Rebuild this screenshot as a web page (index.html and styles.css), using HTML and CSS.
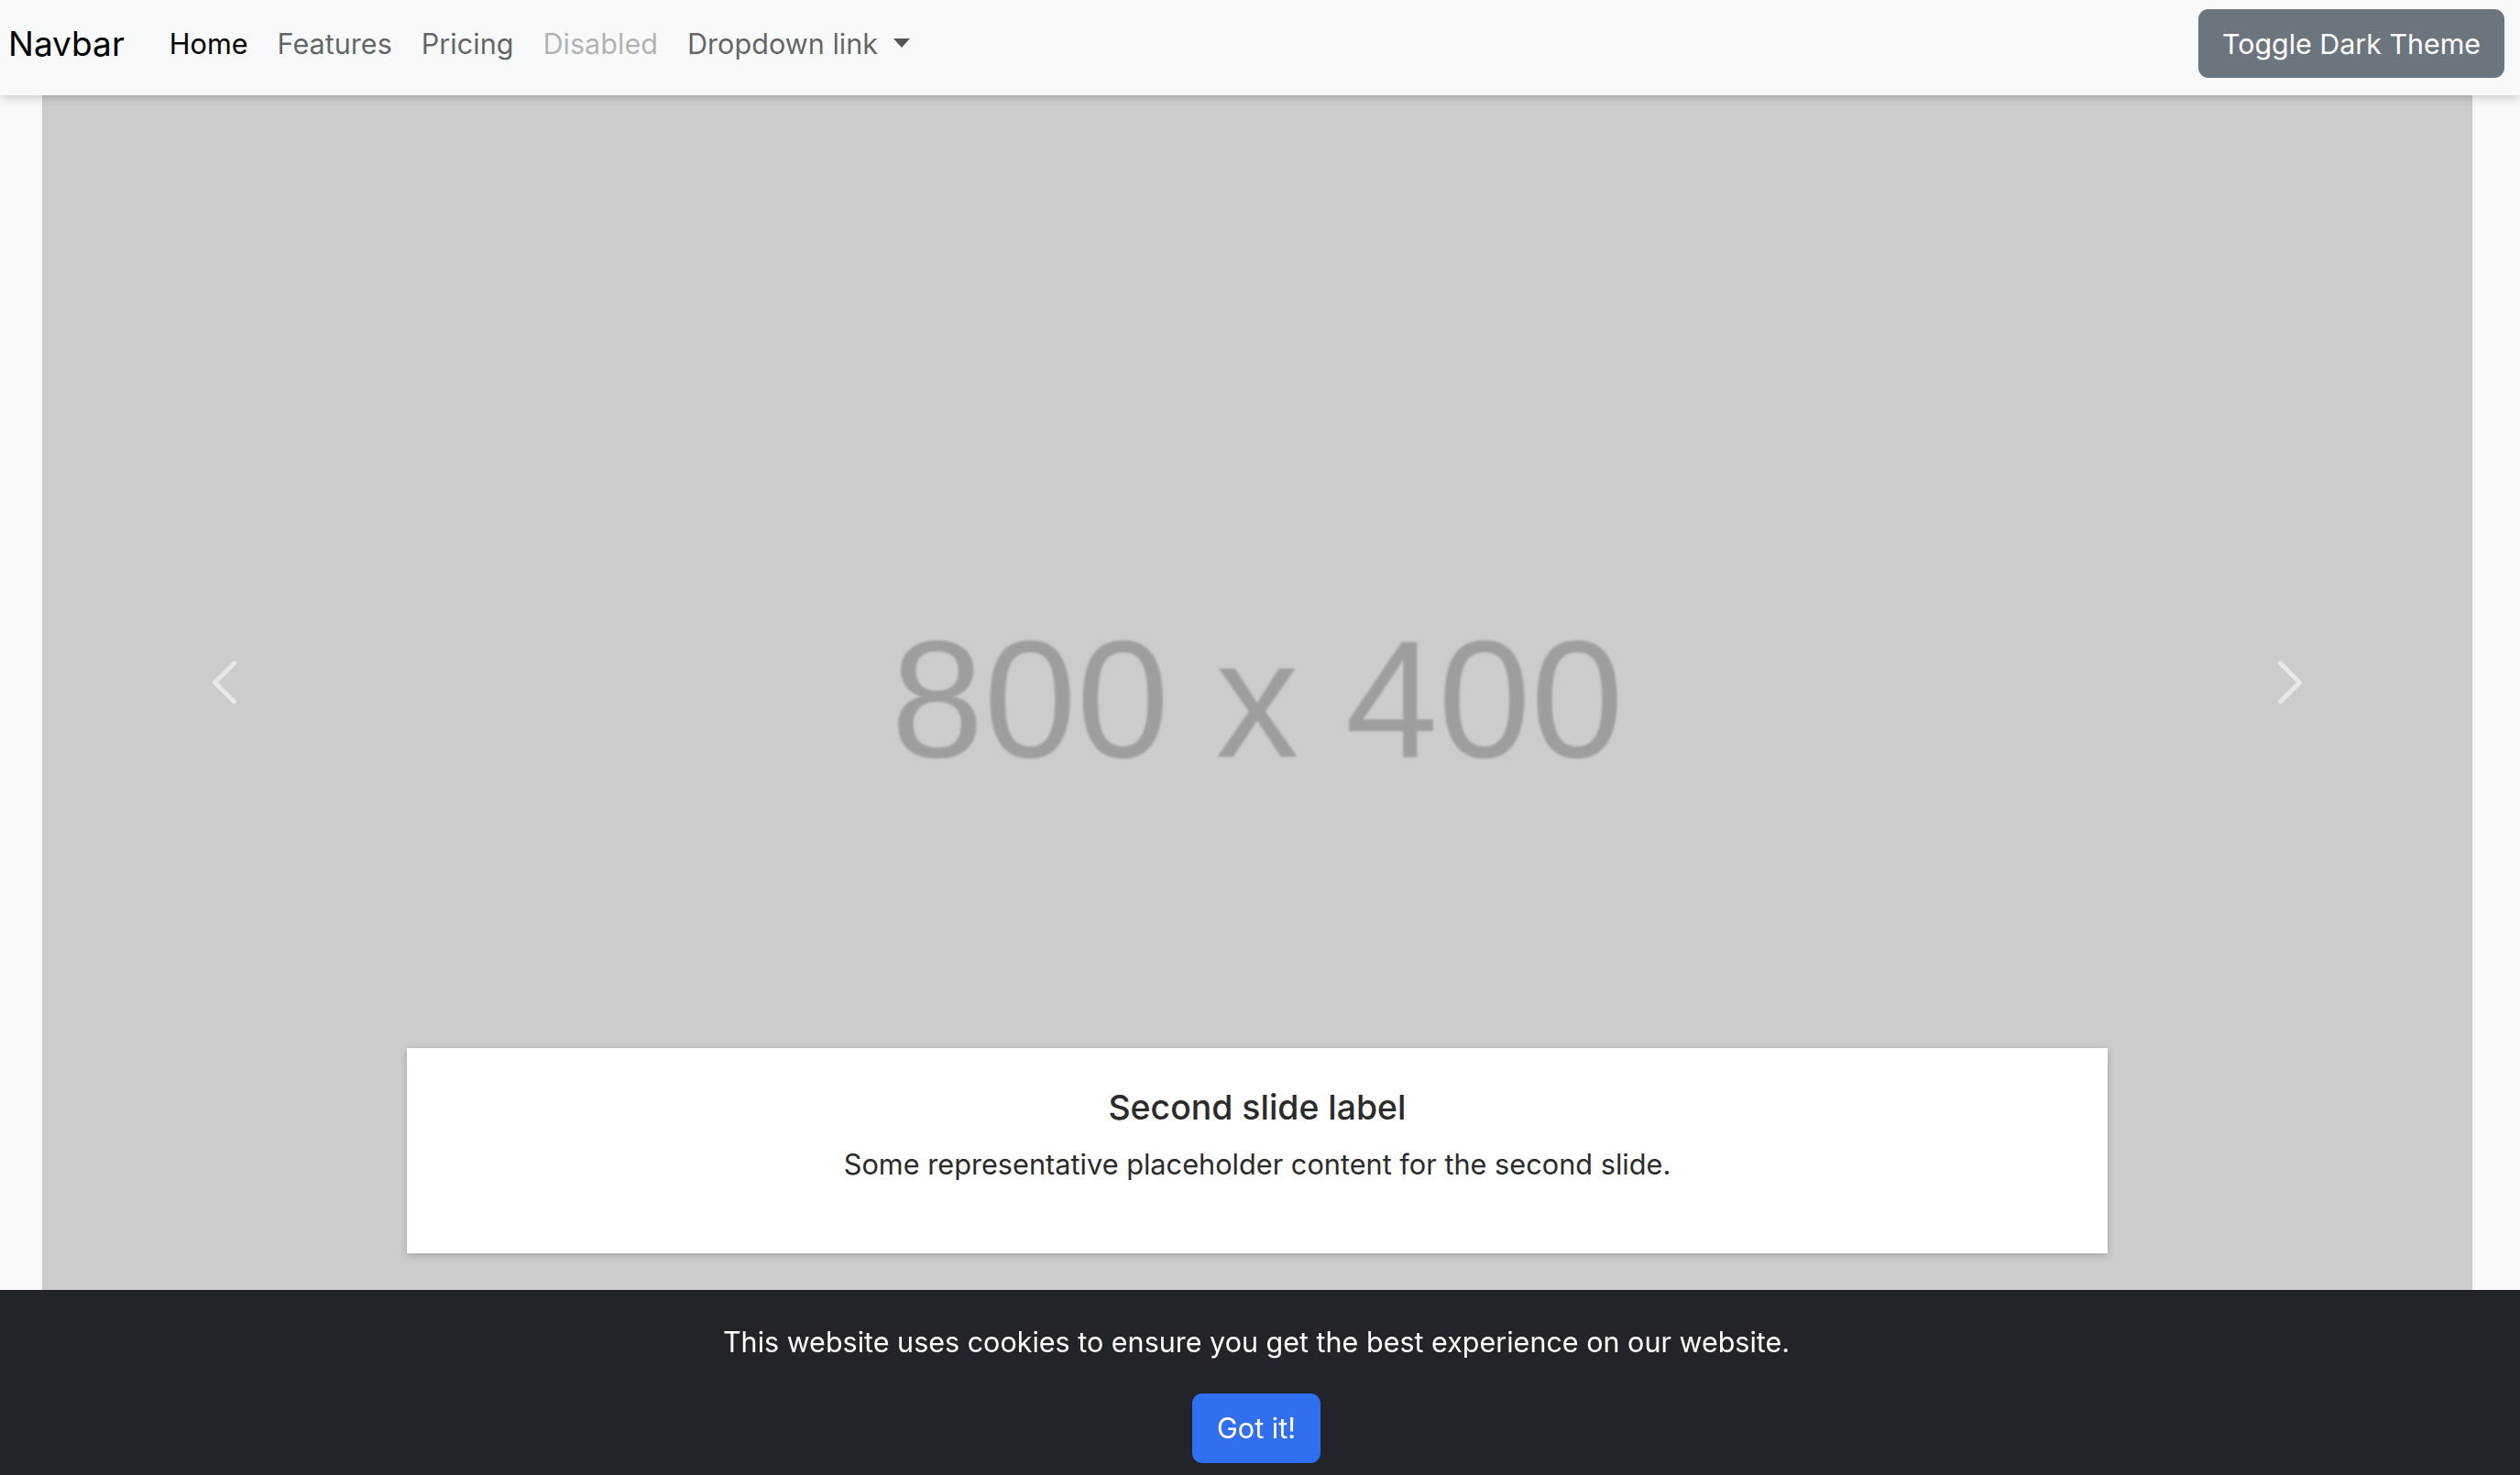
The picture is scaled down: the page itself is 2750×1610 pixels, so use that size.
FILE: index.html
```html
<!DOCTYPE html>
<html lang="en">
<head>
<meta charset="utf-8">
<title>Carousel</title>
<link rel="stylesheet" href="styles.css">
</head>
<body>
<nav class="navbar">
  <a class="brand" href="#">Navbar</a>
  <ul class="nav">
    <li><a class="nav-link active" href="#">Home</a></li>
    <li><a class="nav-link" href="#">Features</a></li>
    <li><a class="nav-link" href="#">Pricing</a></li>
    <li><a class="nav-link disabled" href="#">Disabled</a></li>
    <li><a class="nav-link dropdown" href="#">Dropdown link<span class="caret"></span></a></li>
  </ul>
  <button class="btn-toggle" type="button">Toggle Dark Theme</button>
</nav>
<main class="main">
  <div class="carousel">
    <div class="slide"><span class="placeholder">800 x 400</span></div>
    <a class="control control-prev" href="#" aria-label="Previous">
      <svg class="control-icon" viewBox="0 0 16 16" width="56" height="56"><path d="M11.354 1.646a.5.5 0 0 1 0 .708L5.707 8l5.647 5.646a.5.5 0 0 1-.708.708l-6-6a.5.5 0 0 1 0-.708l6-6a.5.5 0 0 1 .708 0z"/></svg>
    </a>
    <a class="control control-next" href="#" aria-label="Next">
      <svg class="control-icon" viewBox="0 0 16 16" width="56" height="56"><path d="M4.646 1.646a.5.5 0 0 1 .708 0l6 6a.5.5 0 0 1 0 .708l-6 6a.5.5 0 0 1-.708-.708L10.293 8 4.646 2.354a.5.5 0 0 1 0-.708z"/></svg>
    </a>
    <div class="caption">
      <h5 class="caption-title">Second slide label</h5>
      <p class="caption-text">Some representative placeholder content for the second slide.</p>
    </div>
  </div>
</main>
<div class="cookie">
  <p class="cookie-text">This website uses cookies to ensure you get the best experience on our website.</p>
  <button class="btn-primary" type="button">Got it!</button>
</div>
</body>
</html>
```
FILE: styles.css
```css
* { box-sizing: border-box; }
html, body { margin: 0; padding: 0; }
body {
  background: #f9f9f9;
  font-family: "Inter", "Noto Sans", sans-serif;
  color: #212529;
  font-size: 30px;
  line-height: 1.5;
  overflow: hidden;
}
.navbar {
  position: relative;
  z-index: 3;
  height: 104px;
  display: flex;
  align-items: center;
  padding: 10px 17px 19px 9px;
  background: #f8f9fa;
  box-shadow: 0 3px 10px rgba(0,0,0,0.18);
}
.brand {
  font-size: 37px;
  color: #000;
  text-decoration: none;
  margin-right: 33px;
  line-height: 1.5;
}
.nav {
  list-style: none;
  display: flex;
  margin: 0;
  padding: 0;
  flex: 1;
}
.nav-link {
  display: flex;
  align-items: center;
  padding: 0 16px;
  font-size: 30.6px;
  color: rgba(0,0,0,0.62);
  text-decoration: none;
}
.nav-link.active { color: #000; }
.nav-link.disabled { color: rgba(0,0,0,0.3); }
.caret {
  display: inline-block;
  width: 0;
  height: 0;
  margin-left: 17px;
  border-top: 10px solid #555;
  border-left: 9px solid transparent;
  border-right: 9px solid transparent;
}
.btn-toggle {
  height: 75px;
  width: 334px;
  border: 0;
  border-radius: 11px;
  background: #6c757d;
  color: #fff;
  font-family: inherit;
  font-size: 30.4px;
}
.main {
  padding: 0 52px 0 46px;
}
.carousel {
  position: relative;
}
.slide {
  height: 1326px;
  background: #cccccc;
  display: flex;
  align-items: center;
  justify-content: center;
  padding-bottom: 8px;
}
.placeholder {
  font-family: "Liberation Sans", Arial, sans-serif;
  font-size: 182px;
  line-height: 1;
  color: #9e9e9e;
  filter: blur(1.2px);
}
.control {
  position: absolute;
  top: 0;
  height: 1282px;
  width: 15%;
  display: flex;
  align-items: center;
  justify-content: center;
}
.control-prev { left: 0; }
.control-next { right: 0; }
.control-icon {
  fill: #fff;
  stroke: #fff;
  stroke-width: 0.4;
  stroke-linejoin: round;
  opacity: 0.55;
}
.caption {
  position: absolute;
  left: 15%;
  right: 15%;
  top: 1040px;
  height: 224px;
  background: #fff;
  box-shadow: 0 2px 8px rgba(0,0,0,0.2);
  text-align: center;
  padding-top: 43px;
  color: #2b2b2b;
}
.caption-title {
  margin: 0 0 16px;
  font-size: 37.4px;
  font-weight: 500;
  line-height: 1.2;
}
.caption-text {
  margin: 0;
  font-size: 30.7px;
  line-height: 1.5;
}
.cookie {
  position: fixed;
  left: 0;
  right: 8px;
  bottom: 0;
  height: 202px;
  background: #212529;
  color: #fff;
  text-align: center;
  padding-top: 34px;
  box-shadow: 8px 0 0 #212529;
}
.cookie-text {
  margin: 0 0 33px;
  font-size: 30.5px;
  line-height: 1.5;
}
.btn-primary {
  height: 76px;
  width: 140px;
  border: 0;
  border-radius: 11px;
  background: #316ff1;
  color: #fff;
  font-family: inherit;
  font-size: 30.6px;
}
```
